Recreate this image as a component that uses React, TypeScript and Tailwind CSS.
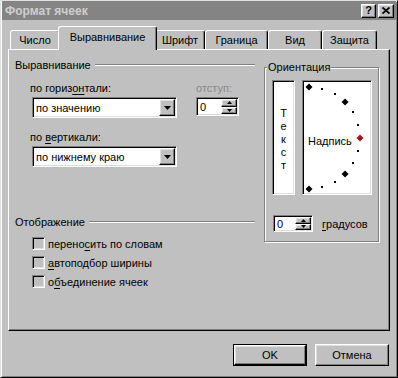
import React from "react";

const sunken =
  "border border-t-[#808080] border-l-[#808080] border-r-white border-b-white shadow-[inset_1px_1px_0_#000,inset_-1px_-1px_0_#dfdfdf]";
const raised =
  "border border-t-white border-l-white border-r-black border-b-black shadow-[inset_-1px_-1px_0_#808080,inset_1px_1px_0_#dfdfdf] bg-[#c0c0c0]";

function Down({ w = 7, h = 4 }: { w?: number; h?: number }) {
  return (
    <svg width={w} height={h} viewBox={`0 0 ${w} ${h}`}>
      <path d={`M0 0H${w}L${w / 2} ${h}Z`} fill="#000" />
    </svg>
  );
}
function Up({ w = 5, h = 3 }: { w?: number; h?: number }) {
  return (
    <svg width={w} height={h} viewBox={`0 0 ${w} ${h}`}>
      <path d={`M0 ${h}H${w}L${w / 2} 0Z`} fill="#000" />
    </svg>
  );
}

function Select({ text }: { text: string }) {
  return (
    <div className={`${sunken} bg-white w-[145px] h-[21px] flex items-center justify-between`}>
      <span className="pl-[3px]">{text}</span>
      <div className={`${raised} w-[16px] h-[17px] mr-[1px] flex items-center justify-center`}>
        <Down />
      </div>
    </div>
  );
}

function Spin({ w, h }: { w: string; h: string }) {
  return (
    <div className={`${sunken} bg-white ${w} ${h} flex items-stretch justify-between`}>
      <span className="pl-[3px] self-center">0</span>
      <div className="flex flex-col w-[16px] m-[1px]">
        <div className={`${raised} flex-1 flex items-center justify-center`}>
          <Up />
        </div>
        <div className={`${raised} flex-1 flex items-center justify-center`}>
          <Down w={5} h={3} />
        </div>
      </div>
    </div>
  );
}

function Header({ text }: { text: string }) {
  return (
    <div className="flex items-center h-[14px]">
      <span>{text}</span>
      <div className="flex-1 ml-[4px] h-[2px] border-t border-t-[#808080] border-b border-b-white" />
    </div>
  );
}

function Check({ children }: { children: React.ReactNode }) {
  return (
    <div className="flex items-center h-[19px] gap-[3px]">
      <div className={`${sunken} bg-[#c0c0c0] w-[13px] h-[13px]`} />
      <span>{children}</span>
    </div>
  );
}

const U = ({ c }: { c: string }) => (
  <span className="underline underline-offset-[2px] decoration-[1px]">{c}</span>
);

function Tab({ label, w, active }: { label: string; w: string; active?: boolean }) {
  if (active) {
    return (
      <div
        className={`relative z-10 ${w} h-[24px] -mx-[2px] -mb-[1px] bg-[#c0c0c0] border-t border-l border-t-white border-l-white border-r border-r-black shadow-[inset_-1px_0_0_#808080] rounded-t-[3px] flex items-center justify-center pb-[4px]`}
      >
        {label}
      </div>
    );
  }
  return (
    <div
      className={`${w} h-[19px] bg-[#c0c0c0] border-t border-l border-t-white border-l-white border-r border-r-black shadow-[inset_-1px_0_0_#808080] rounded-t-[3px] flex items-center justify-center pb-[1px]`}
    >
      {label}
    </div>
  );
}

function Arc() {
  const cx = 7;
  const cy = 58;
  const r = 51;
  const pts = [0, 15, 30, 45, 60, 75, 90, 105, 120, 135, 150, 165, 180].map((a) => {
    const t = (a * Math.PI) / 180;
    return { a, x: cx + r * Math.sin(t), y: cy - r * Math.cos(t) };
  });
  return (
    <svg className="absolute left-0 top-0" width="68" height="113" viewBox="1 1 68 113">
      {pts.map((p) => {
        const big = p.a % 45 === 0;
        if (big) {
          const s = 3.5;
          return (
            <path
              key={p.a}
              d={`M${p.x} ${p.y - s}L${p.x + s} ${p.y}L${p.x} ${p.y + s}L${p.x - s} ${p.y}Z`}
              fill={p.a === 90 ? "#a0141e" : "#000"}
            />
          );
        }
        return <rect key={p.a} x={Math.round(p.x) - 1} y={Math.round(p.y) - 1} width="2" height="2" fill="#000" />;
      })}
    </svg>
  );
}

export default function App() {
  return (
    <div className="w-[398px] h-[378px] bg-[#c0c0c0] border border-t-[#dfdfdf] border-l-[#dfdfdf] border-r-black border-b-black shadow-[inset_1px_1px_0_#fff,inset_-1px_-1px_0_#808080] flex flex-col font-['Liberation_Sans',Arial,sans-serif] text-[11px] leading-[14px] text-black">
      {/* Title bar */}
      <div className="mx-[1px] h-[19px] bg-[#848484] flex items-center justify-between pl-[3px] pr-[2px]">
        <span className="text-[12px] font-bold text-[#cfcfcf]">Формат ячеек</span>
        <div className="flex gap-[2px]">
          <div className={`${raised} w-[15px] h-[14px] flex items-center justify-center text-[11px] font-bold leading-none`}>
            ?
          </div>
          <div className={`${raised} w-[16px] h-[14px] flex items-center justify-center`}>
            <svg width="8" height="7" viewBox="0 0 8 7">
              <path d="M0.5 0.5L7.5 6.5M7.5 0.5L0.5 6.5" stroke="#000" strokeWidth="1.8" />
            </svg>
          </div>
        </div>
      </div>

      {/* Tabs */}
      <div className="mt-[6px] h-[23px] pl-[9px] flex items-end">
        <Tab label="Число" w="w-[50px]" />
        <Tab label="Выравнивание" w="w-[99px]" active />
        <Tab label="Шрифт" w="w-[50px]" />
        <Tab label="Граница" w="w-[63px]" />
        <Tab label="Вид" w="w-[54px]" />
        <Tab label="Защита" w="w-[55px]" />
      </div>

      {/* Panel */}
      <div className="ml-[7px] w-[382px] h-[282px] border-l border-t border-l-white border-t-white border-r border-b border-r-black border-b-black shadow-[inset_-1px_-1px_0_#808080] flex">
        {/* Left column */}
        <div className="w-[246px] pl-[6px] pt-[8px] flex flex-col">
          <Header text="Выравнивание" />
          <div className="mt-[9px] flex">
            <div className="pl-[15px] flex flex-col">
              <span>
                по гориз<U c="о" />
                <U c="н" />
                тали:
              </span>
              <div className="mt-[2px] ml-[2px]">
                <Select text="по значению" />
              </div>
            </div>
            <div className="ml-[19px] flex flex-col">
              <span className="text-[#8a8a8a]">отступ:</span>
              <div className="mt-[2px]">
                <Spin w="w-[43px]" h="h-[19px]" />
              </div>
            </div>
          </div>
          <div className="mt-[12px] pl-[15px] flex flex-col">
            <span>
              по <U c="в" />
              ертикали:
            </span>
            <div className="mt-[2px] ml-[2px]">
              <Select text="по нижнему краю" />
            </div>
          </div>
          <div className="mt-[48px]">
            <Header text="Отображение" />
          </div>
          <div className="mt-[5px] pl-[17px] flex flex-col">
            <Check>
              перено<U c="с" />
              ить по словам
            </Check>
            <Check>
              <U c="а" />
              втоподбор ширины
            </Check>
            <Check>
              о<U c="б" />
              ъединение ячеек
            </Check>
          </div>
        </div>

        {/* Orientation group */}
        <div className="relative ml-[9px] mt-[17px] w-[115px] h-[175px] border border-[#808080] shadow-[inset_1px_1px_0_#fff,1px_1px_0_#fff] pt-[12px] pl-[7px]">
          <span className="absolute -top-[8px] left-[2px] px-[1px] bg-[#c0c0c0]">Ориентация</span>
          <div className="flex gap-[7px]">
            <div className={`${sunken} bg-white w-[23px] h-[115px] flex flex-col items-center justify-center pt-[4px] leading-[13px]`}>
              <span>Т</span>
              <span>е</span>
              <span>к</span>
              <span>с</span>
              <span>т</span>
            </div>
            <div className={`${sunken} bg-white relative w-[70px] h-[115px] flex items-center pl-[5px] pt-[6px]`}>
              <Arc />
              <span className="relative">Надпись</span>
            </div>
          </div>
          <div className="mt-[20px] ml-[1px] flex items-center">
            <Spin w="w-[40px]" h="h-[17px]" />
            <span className="ml-[9px]">
              <U c="г" />
              радусов
            </span>
          </div>
        </div>
      </div>

      {/* Buttons */}
      <div className="mt-[13px] pr-[8px] flex justify-end gap-[8px]">
        <div className="w-[74px] h-[22px] border border-black">
          <div className={`${raised} w-full h-full flex items-center justify-center`}>OK</div>
        </div>
        <div className={`${raised} w-[74px] h-[22px] flex items-center justify-center`}>Отмена</div>
      </div>
    </div>
  );
}
